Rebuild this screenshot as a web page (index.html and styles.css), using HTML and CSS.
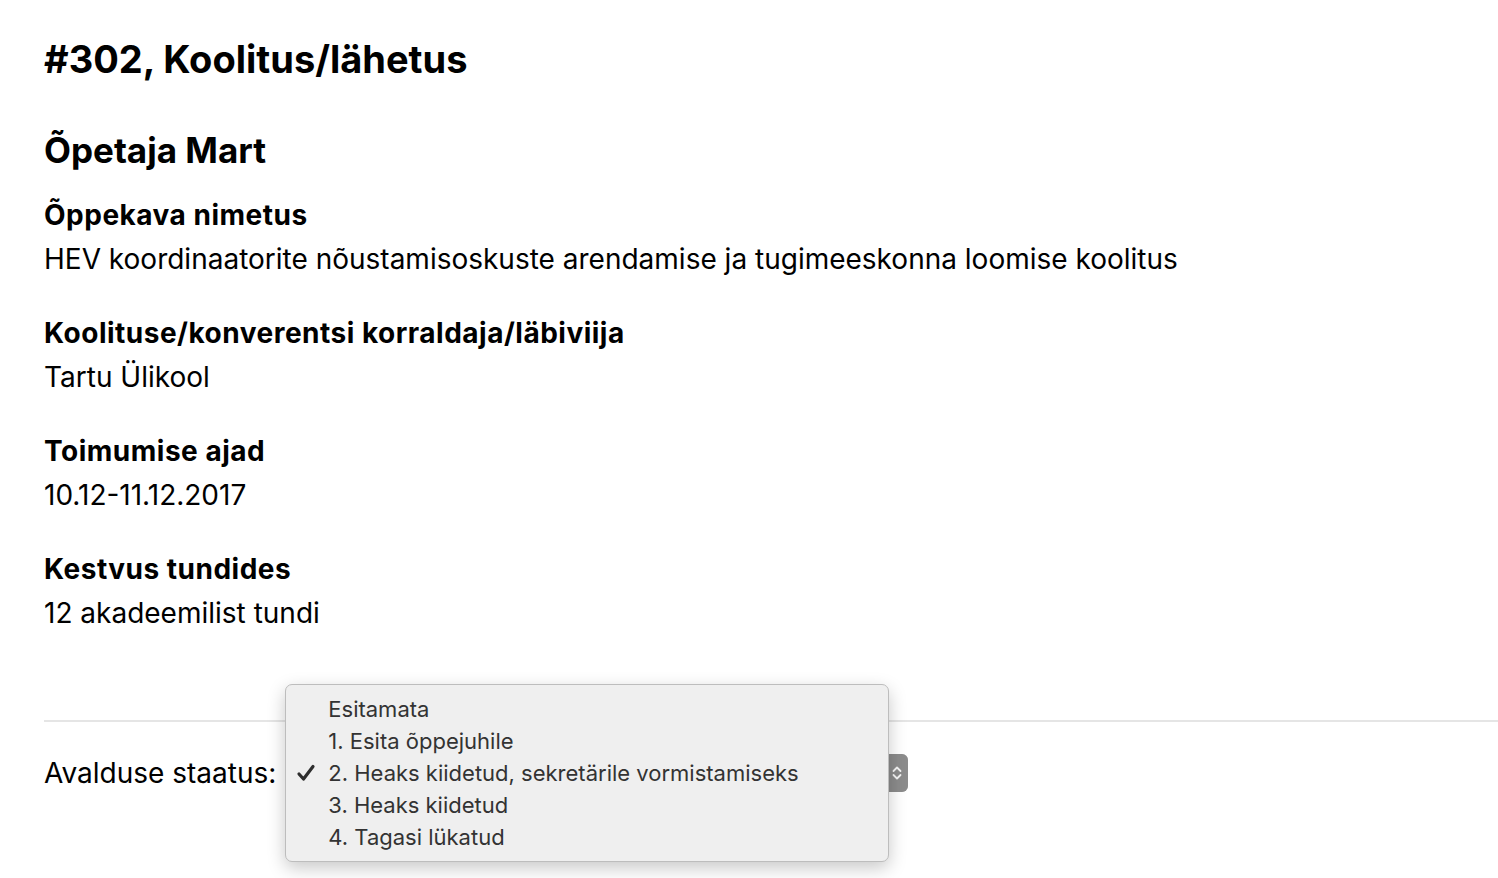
FILE: index.html
```html
<!DOCTYPE html>
<html lang="et">
<head>
<meta charset="utf-8">
<title>#302, Koolitus/lähetus</title>
<link rel="stylesheet" href="styles.css">
</head>
<body>
<main class="page">
  <h1 class="title">#302, Koolitus/lähetus</h1>
  <h2 class="person">Õpetaja Mart</h2>
  <dl class="details">
    <div class="field">
      <dt class="label">Õppekava nimetus</dt>
      <dd class="value">HEV koordinaatorite nõustamisoskuste arendamise ja tugimeeskonna loomise koolitus</dd>
    </div>
    <div class="field">
      <dt class="label">Koolituse/konverentsi korraldaja/läbiviija</dt>
      <dd class="value">Tartu Ülikool</dd>
    </div>
    <div class="field">
      <dt class="label">Toimumise ajad</dt>
      <dd class="value">10.12-11.12.2017</dd>
    </div>
    <div class="field">
      <dt class="label">Kestvus tundides</dt>
      <dd class="value">12 akadeemilist tundi</dd>
    </div>
  </dl>
  <hr class="divider">
  <div class="status-row">
    <span class="status-label">Avalduse staatus:</span>
    <div class="select">
      <span class="select-text">2. Heaks kiidetud, sekretärile vormistamiseks</span>
      <span class="stepper">
        <svg width="12" height="22" viewBox="0 0 12 22"><path d="M2.5 9 L6 5.5 L9.5 9 M2.5 13 L6 16.5 L9.5 13" fill="none" stroke="#f4f4f4" stroke-width="1.8" stroke-linecap="round" stroke-linejoin="round"/></svg>
      </span>
      <ul class="menu">
        <li class="option">Esitamata</li>
        <li class="option">1. Esita õppejuhile</li>
        <li class="option selected">
          <svg class="check" width="20" height="20" viewBox="0 0 20 20"><path d="M3 11 L7.5 16 L17 3.5" fill="none" stroke="#2e2e2e" stroke-width="3.2" stroke-linecap="round" stroke-linejoin="round"/></svg>
          2. Heaks kiidetud, sekretärile vormistamiseks
        </li>
        <li class="option">3. Heaks kiidetud</li>
        <li class="option">4. Tagasi lükatud</li>
      </ul>
    </div>
  </div>
</main>
</body>
</html>
```
FILE: styles.css
```css
html, body {
  margin: 0;
  padding: 0;
  background: #ffffff;
}
body {
  font-family: Inter, "Noto Sans", sans-serif;
  color: #000;
}
.page {
  padding: 0 0 0 44px;
  min-height: 878px;
  box-sizing: border-box;
}
.title {
  margin: 0;
  padding-top: 37px;
  font-size: 38px;
  line-height: 44px;
  font-weight: 700;
}
.person {
  margin: 0;
  padding-top: 49px;
  font-size: 35px;
  line-height: 40px;
  font-weight: 700;
}
.details {
  margin: 23px 0 0 0;
}
.field {
  margin-bottom: 30px;
}
.label {
  font-size: 28px;
  line-height: 44px;
  font-weight: 700;
  letter-spacing: 0.5px;
}
.value {
  margin: 0;
  font-size: 28px;
  line-height: 44px;
  font-weight: 400;
}
.divider {
  margin: 85px 0 0 0;
  border: 0;
  height: 2px;
  background: #e5e5e5;
}
.status-row {
  display: flex;
  align-items: center;
  gap: 14px;
  margin-top: 32px;
  height: 38px;
}
.status-label {
  font-size: 28px;
  line-height: 38px;
}
.select {
  position: relative;
  width: 616px;
  height: 36px;
  display: flex;
  align-items: center;
  justify-content: space-between;
  border: 1px solid #c6c6c6;
  border-radius: 6px;
  background: #fff;
  font-size: 22px;
}
.select-text {
  padding-left: 38px;
  color: #222;
}
.stepper {
  width: 22px;
  height: 38px;
  margin-right: -1px;
  border-radius: 0 6px 6px 0;
  background: #8c8c8c;
  display: flex;
  align-items: center;
  justify-content: center;
}
.menu {
  position: absolute;
  left: -6px;
  top: -71px;
  width: 602px;
  margin: 0;
  padding: 8px 0;
  list-style: none;
  background: #efefef;
  border: 1px solid #bdbdbd;
  border-radius: 7px;
  box-shadow: 0 6px 18px rgba(0,0,0,0.22);
}
.option {
  position: relative;
  padding-left: 42px;
  height: 32px;
  line-height: 32px;
  font-size: 22px;
  color: #333;
}
.check {
  position: absolute;
  left: 10px;
  top: 6px;
}
```
